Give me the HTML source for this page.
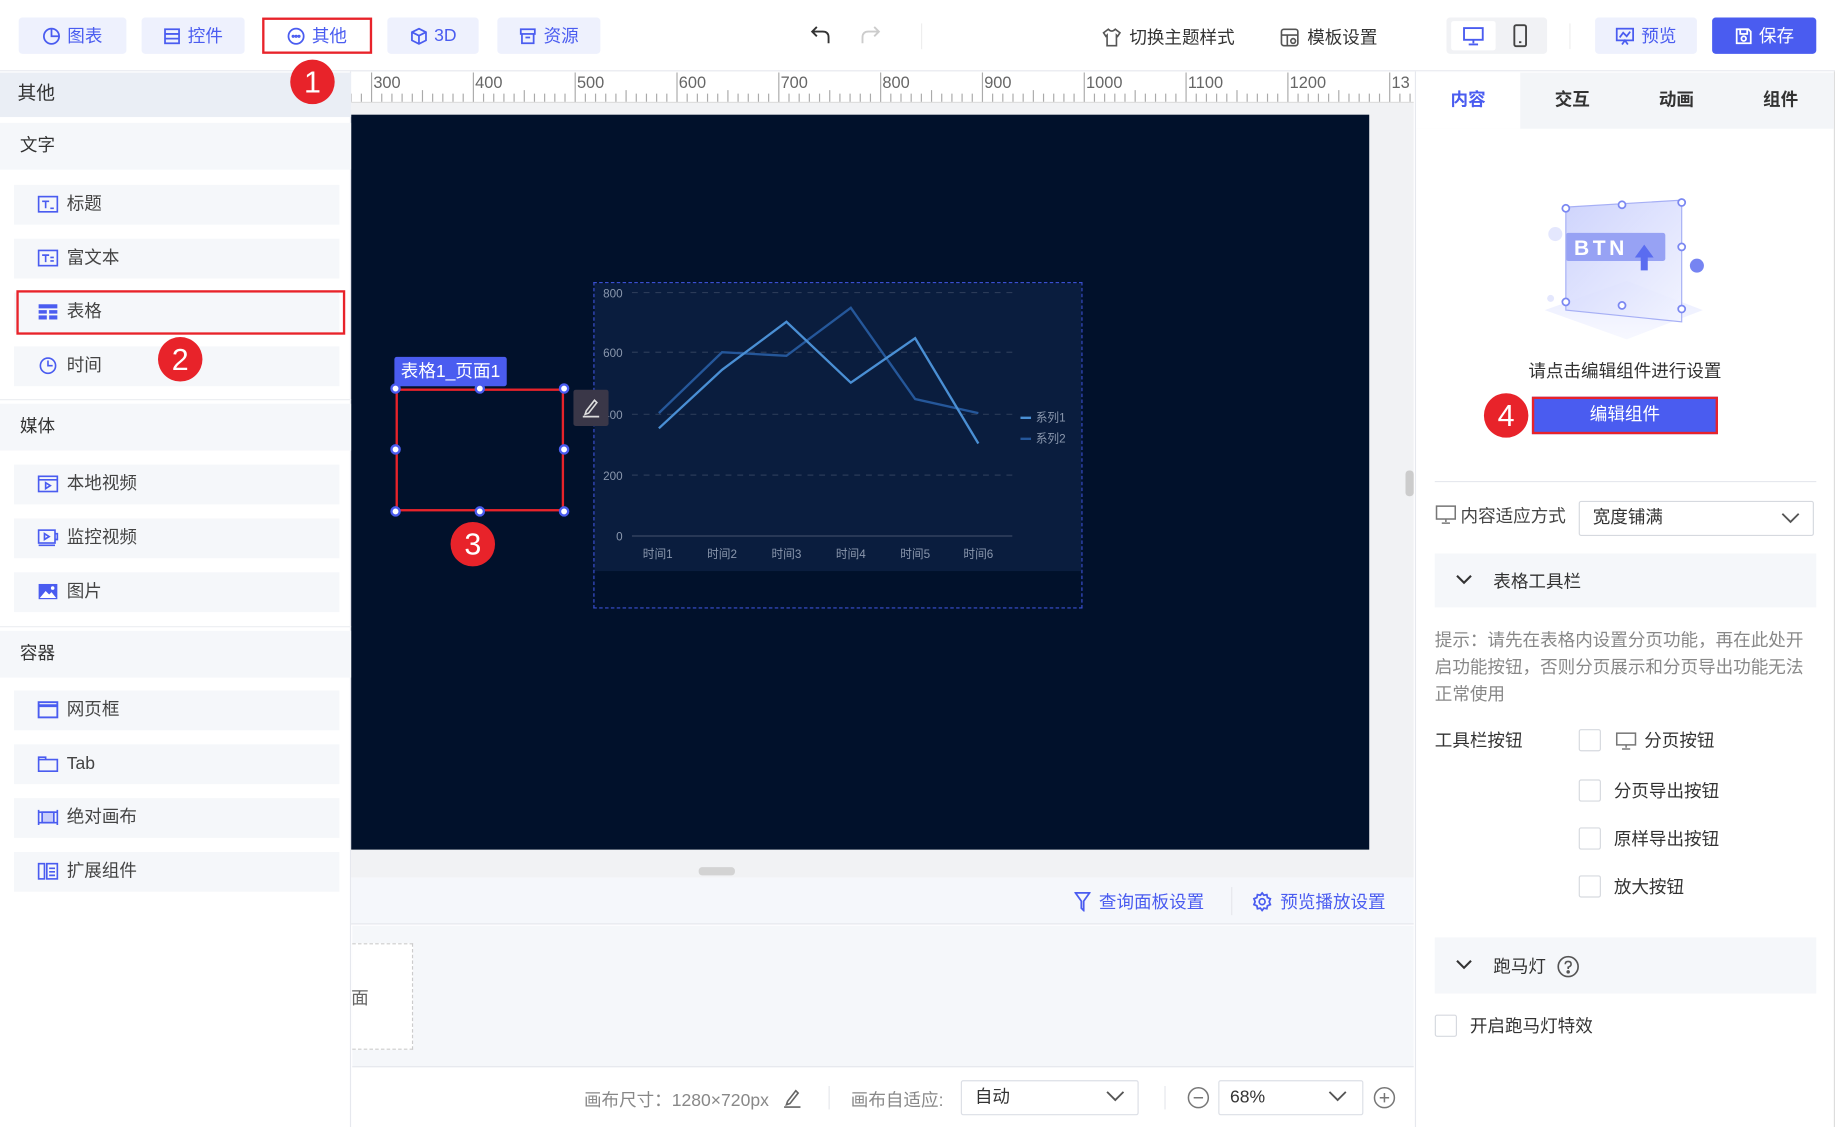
<!DOCTYPE html>
<html><head><meta charset="utf-8">
<style>
*{margin:0;padding:0;box-sizing:border-box}
html,body{width:1835px;height:1127px;overflow:hidden;background:#fff}
#r{position:absolute;left:0;top:0;width:1568px;height:963px;transform:scale(1.17028);transform-origin:0 0;font-family:"Liberation Sans","Noto Sans CJK SC",sans-serif;color:#333;font-size:15px}
.a{position:absolute}
.tb{position:absolute;top:15px;height:31px;background:#eef1fd;border-radius:3px;color:#4a5cf0;font-size:15px;display:flex;align-items:center;justify-content:center;gap:5px}
.badge{position:absolute;width:38px;height:38px;border-radius:50%;background:#e8232a;color:#fff;font-size:26px;display:flex;align-items:center;justify-content:center;font-family:"Liberation Sans",sans-serif;z-index:5}
.sec{position:absolute;left:0;width:300px;height:40px;background:#f5f7fa;font-size:15px;padding-left:17px;line-height:40px;color:#333}
.it{position:absolute;left:12px;width:278px;height:34px;background:#f5f7fa;font-size:15px;line-height:34px;padding-left:45px;color:#444}
.it svg{position:absolute;left:20px;top:9px}
.cb{position:absolute;width:19px;height:19px;border:1px solid #d6d9df;border-radius:2px;background:#fff}
.tab{position:absolute;top:62px;height:48px;width:89px;text-align:center;line-height:48px;font-size:15px;font-weight:bold;color:#333}
</style></head><body><div id="r">

<!-- top bar -->
<div class="a" style="left:0;top:0;width:1568px;height:61px;background:#fff;border-bottom:1px solid #e6e8ee"></div>
<div class="tb" style="left:16px;width:92px"><svg width="16" height="16" viewBox="0 0 16 16" fill="none" stroke="#4a5cf0" stroke-width="1.5"><circle cx="8" cy="8" r="6.5"/><path d="M8 1.5V8H14.5"/></svg>图表</div>
<div class="tb" style="left:121px;width:88px"><svg width="16" height="16" viewBox="0 0 16 16" fill="none" stroke="#4a5cf0" stroke-width="1.5"><rect x="2" y="2" width="12" height="12"/><path d="M2 6H14M2 10H14"/></svg>控件</div>
<div class="tb" style="left:224px;width:94px;background:#fff;border:2px solid #e8232a;border-radius:0"><svg width="16" height="16" viewBox="0 0 16 16" fill="none" stroke="#4a5cf0" stroke-width="1.5"><circle cx="8" cy="8" r="6.5"/><circle cx="5.5" cy="8" r=".6"/><circle cx="8" cy="8" r=".6"/><circle cx="10.5" cy="8" r=".6"/></svg>其他</div>
<div class="tb" style="left:331px;width:78px"><svg width="16" height="16" viewBox="0 0 16 16" fill="none" stroke="#4a5cf0" stroke-width="1.5"><path d="M8 1.5L14 4.5V11.5L8 14.5L2 11.5V4.5Z M2 4.5L8 7.5L14 4.5M8 7.5V14.5"/></svg>3D</div>
<div class="tb" style="left:425px;width:88px"><svg width="16" height="16" viewBox="0 0 16 16" fill="none" stroke="#4a5cf0" stroke-width="1.5"><rect x="2" y="2" width="12" height="4"/><path d="M3 6V14H13V6M6 9H10"/></svg>资源</div>
<svg class="a" style="left:692px;top:21px" width="20" height="18" viewBox="0 0 20 18" fill="none" stroke="#333" stroke-width="1.6"><path d="M6 2L2 6L6 10M2 6H11Q16 6 16 11V16"/></svg>
<svg class="a" style="left:733px;top:21px" width="20" height="18" viewBox="0 0 20 18" fill="none" stroke="#ccc" stroke-width="1.6"><path d="M14 2L18 6L14 10M18 6H9Q4 6 4 11V16"/></svg>
<div class="a" style="left:787px;top:20px;width:1px;height:22px;background:#eee"></div>
<div class="a" style="left:941px;top:21px;font-size:15px;color:#333;display:flex;gap:6px;align-items:center"><svg width="18" height="18" viewBox="0 0 18 18" fill="none" stroke="#555" stroke-width="1.4"><path d="M6 2L2 5L4 8L5 7V16H13V7L14 8L16 5L12 2Q9 5 6 2Z"/></svg>切换主题样式</div>
<div class="a" style="left:1093px;top:21px;font-size:15px;color:#333;display:flex;gap:6px;align-items:center"><svg width="18" height="18" viewBox="0 0 18 18" fill="none" stroke="#555" stroke-width="1.4"><rect x="2" y="2" width="14" height="14" rx="2"/><path d="M2 7H16M7 7V16"/><circle cx="12" cy="12" r="2"/></svg>模板设置</div>
<div class="a" style="left:1236px;top:15px;width:86px;height:31px;background:#f1f2f5;border-radius:3px"></div>
<div class="a" style="left:1240px;top:18px;width:38px;height:25px;background:#fff;border-radius:2px"></div>
<svg class="a" style="left:1249px;top:22px" width="20" height="18" viewBox="0 0 20 18" fill="none" stroke="#4a5cf0" stroke-width="1.6"><rect x="2" y="2" width="16" height="10"/><path d="M10 12V15M6 16H14"/></svg>
<svg class="a" style="left:1292px;top:20px" width="14" height="21" viewBox="0 0 14 21" fill="none" stroke="#444" stroke-width="1.6"><rect x="2" y="1.5" width="10" height="18" rx="1.5"/><path d="M6 16H8"/></svg>
<div class="a" style="left:1341px;top:20px;width:1px;height:22px;background:#eee"></div>
<div class="tb" style="left:1363px;width:87px"><svg width="17" height="16" viewBox="0 0 17 16" fill="none" stroke="#4a5cf0" stroke-width="1.5"><rect x="1.5" y="1.5" width="14" height="10"/><path d="M4 9L7 5L10 8L13 4M6 15L8.5 11.5L11 15"/></svg>预览</div>
<div class="tb" style="left:1463px;width:89px;background:#4a5cf0;color:#fff"><svg width="16" height="16" viewBox="0 0 16 16" fill="none" stroke="#fff" stroke-width="1.5"><path d="M2 2H12L14 4V14H2Z"/><rect x="5" y="2" width="6" height="4"/><circle cx="8" cy="10" r="2"/></svg>保存</div>

<!-- ruler -->
<div class="a" style="left:300px;top:62px;width:908px;height:26px;background:#fff;border-bottom:1px solid #ddd;overflow:hidden">
<svg width="908" height="26" viewBox="0 0 908 26">
<g stroke="#aaa" stroke-width="1">
<path d="M17.5 0V26M104.5 0V26M191.5 0V26M278.5 0V26M365.5 0V26M452.5 0V26M539.5 0V26M626.5 0V26M713.5 0V26M800.5 0V26M887.5 0V26"/>
<g id="tk"><path d="M26.2 18V25M34.9 18V25M43.6 18V25M52.3 18V25M61 15V25M69.7 18V25M78.4 18V25M87.1 18V25M95.8 18V25"/></g>
<use href="#tk" x="87"/><use href="#tk" x="174"/><use href="#tk" x="261"/><use href="#tk" x="348"/><use href="#tk" x="435"/><use href="#tk" x="522"/><use href="#tk" x="609"/><use href="#tk" x="696"/><use href="#tk" x="783"/><use href="#tk" x="-87"/><use href="#tk" x="870"/>
</g>
<g font-size="14" fill="#666" font-family="Liberation Sans Narrow,Liberation Sans,sans-serif">
<text x="19" y="13">300</text><text x="106" y="13">400</text><text x="193" y="13">500</text><text x="280" y="13">600</text><text x="367" y="13">700</text><text x="454" y="13">800</text><text x="541" y="13">900</text><text x="628" y="13">1000</text><text x="715" y="13">1100</text><text x="802" y="13">1200</text><text x="889" y="13">13</text>
</g></svg></div>

<!-- canvas area -->
<div class="a" style="left:300px;top:88px;width:908px;height:662px;background:#f1f2f4"></div>
<div class="a" style="left:300px;top:98px;width:870px;height:628px;background:#01112b"></div>
<div class="a" style="left:1201px;top:402px;width:7px;height:22px;background:#ccc;border-radius:3px"></div>
<div class="a" style="left:597px;top:741px;width:31px;height:7px;background:#d3d3d3;border-radius:3px"></div>

<!-- chart -->
<div class="a" style="left:507px;top:241px;width:418px;height:279px;border:1px dashed #3a4fd0"></div>
<svg class="a" style="left:508px;top:242px" width="416" height="277" viewBox="508 242 416 277">
<rect x="508" y="242" width="416" height="246" fill="#0a1d3e"/>
<g stroke="#2b3b58" stroke-dasharray="5 5" stroke-width="1"><path d="M540 250H865M540 301H865M540 354H865M540 406H865"/></g>
<path d="M540 458H865" stroke="#3a4a66"/>
<g fill="#8a97ad" font-size="10" font-family="Liberation Sans,Noto Sans CJK SC,sans-serif" text-anchor="end">
<text x="532" y="254">800</text><text x="532" y="305">600</text><text x="532" y="358">400</text><text x="532" y="410">200</text><text x="532" y="462">0</text></g>
<g fill="#8a97ad" font-size="10" font-family="Liberation Sans,Noto Sans CJK SC,sans-serif" text-anchor="middle">
<text x="562" y="477">时间1</text><text x="617" y="477">时间2</text><text x="672" y="477">时间3</text><text x="727" y="477">时间4</text><text x="782" y="477">时间5</text><text x="836" y="477">时间6</text></g>
<polyline points="563,353 617,301 672,304 727,263 782,341 836,353" fill="none" stroke="#25579a" stroke-width="2"/>
<polyline points="563,366 617,316 672,275 727,327 782,289 836,379" fill="none" stroke="#4a8fd4" stroke-width="2"/>
<path d="M872 357H881" stroke="#4a8fd4" stroke-width="2"/><path d="M872 375H881" stroke="#25579a" stroke-width="2"/>
<g fill="#8a97ad" font-size="10" font-family="Liberation Sans,Noto Sans CJK SC,sans-serif"><text x="885" y="360">系列1</text><text x="885" y="378">系列2</text></g>
</svg>

<!-- selected element -->
<div class="a" style="left:337px;top:305px;width:96px;height:25px;background:#4a5cf0;color:#fff;font-size:15px;line-height:25px;text-align:center;border-radius:2px">表格1_页面1</div>
<div class="a" style="left:338px;top:332px;width:144px;height:105px;border:2px solid #e8232a"></div>
<svg class="a" style="left:333px;top:327px" width="155" height="115" viewBox="0 0 155 115" fill="#fff" stroke="#4a5cf0" stroke-width="2">
<circle cx="5" cy="5" r="3.5"/><circle cx="77" cy="5" r="3.5"/><circle cx="149" cy="5" r="3.5"/><circle cx="5" cy="57" r="3.5"/><circle cx="149" cy="57" r="3.5"/><circle cx="5" cy="110" r="3.5"/><circle cx="77" cy="110" r="3.5"/><circle cx="149" cy="110" r="3.5"/></svg>
<div class="a" style="left:490px;top:333px;width:30px;height:31px;background:#3a3748;border-radius:2px"></div>
<svg class="a" style="left:496px;top:338px" width="18" height="20" viewBox="0 0 18 20" fill="none" stroke="#ddd" stroke-width="1.4"><path d="M5 13L12 4L14 6L7 15L4 16Z M2 18H16"/></svg>

<!-- left panel -->
<div class="a" style="left:0;top:61px;width:300px;height:902px;background:#fff;border-right:1px solid #e6e8ee"></div>
<div class="a" style="left:0;top:62px;width:300px;height:38px;background:#eaeef5;font-size:16px;line-height:38px;padding-left:15px;color:#333">其他</div>
<div class="sec" style="top:105px">文字</div>
<div class="it" style="top:158px"><svg width="18" height="15" viewBox="0 0 18 15" fill="none" stroke="#4a5cf0" stroke-width="1.4"><rect x="1" y="1" width="16" height="13"/><path d="M4 5H10M7 5V11M11 11H14"/></svg>标题</div>
<div class="it" style="top:204px"><svg width="18" height="15" viewBox="0 0 18 15" fill="none" stroke="#4a5cf0" stroke-width="1.4"><rect x="1" y="1" width="16" height="13"/><path d="M4 5H10M7 5V11M11 7H14M11 10H14"/></svg>富文本</div>
<div class="it" style="top:250px"><svg width="18" height="15" viewBox="0 0 18 15" fill="#4a5cf0"><rect x="1" y="1" width="16" height="3.5"/><rect x="1" y="6" width="7" height="3"/><rect x="10" y="6" width="7" height="3"/><rect x="1" y="10.5" width="7" height="3.5"/><rect x="10" y="10.5" width="7" height="3.5"/></svg>表格</div>
<div class="a" style="left:14px;top:248px;width:281px;height:38px;border:2px solid #e8232a"></div>
<div class="it" style="top:296px"><svg width="18" height="15" viewBox="0 0 18 15" fill="none" stroke="#4a5cf0" stroke-width="1.4"><circle cx="9" cy="7.5" r="6.5"/><path d="M9 3V7.5H13"/></svg>时间</div>
<div class="a" style="left:0;top:341px;width:300px;height:1px;background:#eceef2"></div>
<div class="sec" style="top:345px">媒体</div>
<div class="it" style="top:397px"><svg width="18" height="15" viewBox="0 0 18 15" fill="none" stroke="#4a5cf0" stroke-width="1.4"><rect x="1" y="1" width="16" height="13"/><path d="M1 4H17M7 6.5V11.5L11 9Z"/></svg>本地视频</div>
<div class="it" style="top:443px"><svg width="18" height="15" viewBox="0 0 18 15" fill="none" stroke="#4a5cf0" stroke-width="1.4"><rect x="1" y="1" width="14" height="11"/><path d="M15 4H17V9H15M6 4V9L10 6.5Z M1 14H15"/></svg>监控视频</div>
<div class="it" style="top:489px"><svg width="18" height="15" viewBox="0 0 18 15"><rect x="1" y="1" width="16" height="13" fill="#4a5cf0"/><path d="M2 13L7 7L10 10L12 8L16 13Z" fill="#fff"/><circle cx="13" cy="4.5" r="1.5" fill="#fff"/></svg>图片</div>
<div class="a" style="left:0;top:535px;width:300px;height:1px;background:#eceef2"></div>
<div class="sec" style="top:539px">容器</div>
<div class="it" style="top:590px"><svg width="18" height="15" viewBox="0 0 18 15" fill="none" stroke="#4a5cf0" stroke-width="1.6"><rect x="1" y="1" width="16" height="13"/><path d="M1 4H17" stroke-width="2.5"/></svg>网页框</div>
<div class="it" style="top:636px"><svg width="18" height="15" viewBox="0 0 18 15" fill="none" stroke="#4a5cf0" stroke-width="1.4"><path d="M1 2H7V4H17V14H1Z M1 4H7"/></svg>Tab</div>
<div class="it" style="top:682px"><svg width="18" height="15" viewBox="0 0 18 15" fill="none" stroke="#4a5cf0" stroke-width="1.4"><rect x="4" y="3" width="10" height="9" fill="#c8cdfb"/><path d="M1 1V14M17 1V14M1 3H17M1 12H17"/></svg>绝对画布</div>
<div class="it" style="top:728px"><svg width="18" height="15" viewBox="0 0 18 15" fill="none" stroke="#4a5cf0" stroke-width="1.4"><rect x="1" y="1" width="5" height="13"/><rect x="8" y="1" width="9" height="13"/><path d="M10 5H15M10 8H15M10 11H15"/></svg>扩展组件</div>

<!-- bottom area -->
<div class="a" style="left:300px;top:750px;width:908px;height:40px;background:#f5f7fb;border-bottom:1px solid #e5e7ec"></div>
<div class="a" style="left:918px;top:760px;color:#4a5cf0;font-size:15px;display:flex;gap:7px;align-items:center"><svg width="14" height="17" viewBox="0 0 14 17" fill="none" stroke="#4a5cf0" stroke-width="1.5"><path d="M1 1H13L8 8V16L6 14V8Z"/></svg>查询面板设置</div>
<div class="a" style="left:1052px;top:758px;width:1px;height:24px;background:#e5e7ec"></div>
<div class="a" style="left:1070px;top:760px;color:#4a5cf0;font-size:15px;display:flex;gap:7px;align-items:center"><svg width="17" height="17" viewBox="0 0 17 17" fill="none" stroke="#4a5cf0" stroke-width="1.5"><path d="M8.5 1L10 3L12.5 2.5L13 5L15.5 6L14.5 8.5L15.5 11L13 12L12.5 14.5L10 14L8.5 16L7 14L4.5 14.5L4 12L1.5 11L2.5 8.5L1.5 6L4 5L4.5 2.5L7 3Z"/><circle cx="8.5" cy="8.5" r="2.5"/></svg>预览播放设置</div>
<div class="a" style="left:301px;top:791px;width:907px;height:121px;background:#f5f7fa;border-bottom:1px solid #e5e7ec"></div>
<div class="a" style="left:301px;top:806px;width:52px;height:91px;border:1px dashed #ccc;border-left:none;background:#fff"></div>
<div class="a" style="left:300px;top:842px;font-size:15px;color:#666">面</div>
<div class="a" style="left:301px;top:913px;width:908px;height:50px;background:#fff"></div>
<div class="a" style="left:499px;top:929px;font-size:15px;color:#888">画布尺寸：1280×720px</div>
<svg class="a" style="left:668px;top:928px" width="18" height="20" viewBox="0 0 18 20" fill="none" stroke="#666" stroke-width="1.4"><path d="M5 13L12 4L14 6L7 15L4 16Z M2 18H16"/></svg>
<div class="a" style="left:708px;top:928px;width:1px;height:20px;background:#e5e7ec"></div>
<div class="a" style="left:727px;top:929px;font-size:15px;color:#888">画布自适应:</div>
<div class="a" style="left:821px;top:923px;width:152px;height:30px;border:1px solid #dcdfe6;border-radius:2px;font-size:15px;line-height:28px;padding-left:11px;color:#333">自动</div>
<svg class="a" style="left:944px;top:931px" width="18" height="12" viewBox="0 0 18 12" fill="none" stroke="#555" stroke-width="1.6"><path d="M2 2L9 9L16 2"/></svg>
<div class="a" style="left:995px;top:928px;width:1px;height:20px;background:#e5e7ec"></div>
<svg class="a" style="left:1014px;top:928px" width="20" height="20" viewBox="0 0 20 20" fill="none" stroke="#777" stroke-width="1.3"><circle cx="10" cy="10" r="8.5"/><path d="M6 10H14"/></svg>
<div class="a" style="left:1041px;top:923px;width:124px;height:30px;border:1px solid #dcdfe6;border-radius:2px;font-size:15px;line-height:28px;padding-left:9px;color:#333">68%</div>
<svg class="a" style="left:1134px;top:931px" width="18" height="12" viewBox="0 0 18 12" fill="none" stroke="#555" stroke-width="1.6"><path d="M2 2L9 9L16 2"/></svg>
<svg class="a" style="left:1173px;top:928px" width="20" height="20" viewBox="0 0 20 20" fill="none" stroke="#777" stroke-width="1.3"><circle cx="10" cy="10" r="8.5"/><path d="M6 10H14M10 6V14"/></svg>

<!-- right panel -->
<div class="a" style="left:1209px;top:61px;width:359px;height:902px;background:#fff;border-left:1px solid #e6e8ee;border-right:1px solid #ddd"></div>
<div class="a" style="left:1210px;top:62px;width:357px;height:48px;background:#f3f5f8"></div>
<div class="tab" style="left:1210px;background:#fff;color:#4a5cf0">内容</div>
<div class="tab" style="left:1299px">交互</div>
<div class="tab" style="left:1388px">动画</div>
<div class="tab" style="left:1477px">组件</div>

<svg class="a" style="left:1315px;top:165px" width="150" height="130" viewBox="0 0 150 130">
<defs><linearGradient id="g1" x1="0" y1="0" x2="1" y2="1"><stop offset="0" stop-color="#c9cffc"/><stop offset="1" stop-color="#f1f3ff"/></linearGradient>
<linearGradient id="g2" x1="0" y1="0" x2="0" y2="1"><stop offset="0" stop-color="#e8ebff"/><stop offset="1" stop-color="#f7f8ff"/></linearGradient></defs>
<path d="M5 100L75 75L140 100L75 125Z" fill="url(#g2)"/>
<path d="M23 12L122 6V110L23 100Z" fill="url(#g1)" opacity=".9"/>
<rect x="23" y="34" width="85" height="24" rx="2" fill="#97a2f4"/>
<text x="30" y="53" font-size="18" font-weight="bold" fill="#fff" font-family="Liberation Sans,sans-serif" letter-spacing="3">BTN</text>
<path d="M82 55L90 44L98 55H93V66H87V55Z" fill="#5a6cf0"/>
<path d="M23 12L122 6V110L23 100Z" fill="none" stroke="#a6aff5" stroke-width="1"/>
<g fill="#fff" stroke="#7b88f2" stroke-width="1.5"><circle cx="23" cy="13" r="3"/><circle cx="71" cy="10" r="3"/><circle cx="122" cy="8" r="3"/><circle cx="122" cy="46" r="3"/><circle cx="122" cy="99" r="3"/><circle cx="71" cy="96" r="3"/><circle cx="23" cy="93" r="3"/></g>
<circle cx="135" cy="62" r="6" fill="#7684f2"/><circle cx="14" cy="35" r="6" fill="#e4e7fd"/><circle cx="10" cy="90" r="3" fill="#e4e7fd"/>
</svg>
<div class="a" style="left:1210px;top:306px;width:357px;text-align:center;font-size:15px;color:#333">请点击编辑组件进行设置</div>
<div class="a" style="left:1309px;top:339px;width:159px;height:32px;background:#4a5cf0;border:2px solid #e8232a;color:#fff;font-size:15px;text-align:center;line-height:28px">编辑组件</div>
<div class="a" style="left:1226px;top:411px;width:326px;height:1px;background:#e6e8ee"></div>
<svg class="a" style="left:1226px;top:431px" width="20" height="18" viewBox="0 0 20 18" fill="none" stroke="#777" stroke-width="1.3"><rect x="1.5" y="1.5" width="16" height="11"/><path d="M9.5 12.5V15M6 16H13"/></svg>
<div class="a" style="left:1248px;top:430px;font-size:15px;color:#444">内容适应方式</div>
<div class="a" style="left:1349px;top:428px;width:201px;height:30px;border:1px solid #d6d9df;border-radius:2px;font-size:15px;line-height:28px;padding-left:11px;color:#333">宽度铺满</div>
<svg class="a" style="left:1521px;top:437px" width="18" height="12" viewBox="0 0 18 12" fill="none" stroke="#555" stroke-width="1.6"><path d="M2 2L9 9L16 2"/></svg>
<div class="a" style="left:1226px;top:473px;width:326px;height:46px;background:#f5f7fa"></div>
<svg class="a" style="left:1243px;top:490px" width="16" height="11" viewBox="0 0 16 11" fill="none" stroke="#333" stroke-width="1.8"><path d="M2 2L8 8L14 2"/></svg>
<div class="a" style="left:1276px;top:486px;font-size:15px;color:#333">表格工具栏</div>
<div class="a" style="left:1226px;top:536px;width:328px;font-size:15px;line-height:23px;color:#888">提示：请先在表格内设置分页功能，再在此处开启功能按钮，否则分页展示和分页导出功能无法正常使用</div>
<div class="a" style="left:1226px;top:622px;font-size:15px;color:#333">工具栏按钮</div>
<div class="cb" style="left:1349px;top:623px"></div>
<svg class="a" style="left:1380px;top:625px" width="20" height="17" viewBox="0 0 20 17" fill="none" stroke="#777" stroke-width="1.3"><rect x="1.5" y="1.5" width="16" height="10"/><path d="M9.5 11.5V14M6 15H13"/></svg>
<div class="a" style="left:1405px;top:622px;font-size:15px;color:#333">分页按钮</div>
<div class="cb" style="left:1349px;top:666px"></div><div class="a" style="left:1379px;top:665px;font-size:15px;color:#333">分页导出按钮</div>
<div class="cb" style="left:1349px;top:707px"></div><div class="a" style="left:1379px;top:706px;font-size:15px;color:#333">原样导出按钮</div>
<div class="cb" style="left:1349px;top:748px"></div><div class="a" style="left:1379px;top:747px;font-size:15px;color:#333">放大按钮</div>
<div class="a" style="left:1226px;top:801px;width:326px;height:48px;background:#f5f7fa"></div>
<svg class="a" style="left:1243px;top:819px" width="16" height="11" viewBox="0 0 16 11" fill="none" stroke="#333" stroke-width="1.8"><path d="M2 2L8 8L14 2"/></svg>
<div class="a" style="left:1276px;top:815px;font-size:15px;color:#333">跑马灯</div>
<svg class="a" style="left:1330px;top:816px" width="20" height="20" viewBox="0 0 20 20" fill="none" stroke="#555" stroke-width="1.4"><circle cx="10" cy="10" r="8.5"/><path d="M7.5 8Q7.5 5.5 10 5.5Q12.5 5.5 12.5 7.8Q12.5 9.5 10 10.5V12"/><circle cx="10" cy="14.5" r=".8" fill="#555"/></svg>
<div class="cb" style="left:1226px;top:867px"></div>
<div class="a" style="left:1256px;top:866px;font-size:15px;color:#333">开启跑马灯特效</div>

<div class="badge" style="left:248px;top:51px">1</div>
<div class="badge" style="left:135px;top:288px">2</div>
<div class="badge" style="left:385px;top:446px">3</div>
<div class="badge" style="left:1268px;top:336px">4</div>
</div></body></html>
